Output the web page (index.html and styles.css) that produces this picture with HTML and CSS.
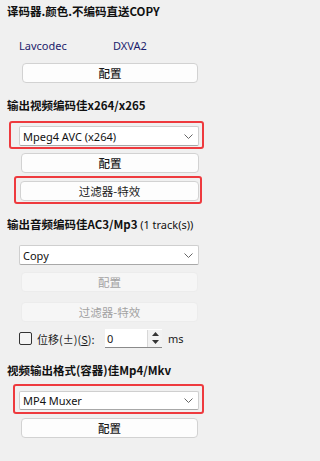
FILE: index.html
```html
<!DOCTYPE html>
<html lang="zh">
<head>
<meta charset="utf-8">
<link rel="stylesheet" href="styles.css">
</head>
<body>
<div class="panel">
  <div class="title t1">译码器.颜色.不编码直送COPY</div>
  <div class="info"><span class="info-a">Lavcodec</span><span>DXVA2</span></div>
  <div class="btn b1">配置</div>

  <div class="title t2">输出视频编码佳x264/x265</div>
  <div class="mark m1">
    <div class="combo">Mpeg4 AVC (x264)<svg class="chev" width="9" height="5" viewBox="0 0 9 5"><path d="M0.5 0.5 L4.5 4.5 L8.5 0.5" fill="none" stroke="#666" stroke-width="1"/></svg></div>
  </div>
  <div class="btn b2">配置</div>
  <div class="mark m2">
    <div class="btn b3">过滤器-特效</div>
  </div>

  <div class="title t3">输出音频编码佳AC3/Mp3 <span class="norm">(1 track(s))</span></div>
  <div class="combo c3">Copy<svg class="chev" width="9" height="5" viewBox="0 0 9 5"><path d="M0.5 0.5 L4.5 4.5 L8.5 0.5" fill="none" stroke="#666" stroke-width="1"/></svg></div>
  <div class="btn disabled d1">配置</div>
  <div class="btn disabled d2">过滤器-特效</div>
  <div class="shift">
    <span class="check"></span>
    <span class="shift-label">位移(±)(<u>S</u>):</span>
    <span class="spin"><span class="spin-val">0</span><span class="spin-btns"><svg width="7" height="4" viewBox="0 0 7 4"><path d="M0 4 L3.5 0 L7 4Z" fill="#333"/></svg><svg width="7" height="4" viewBox="0 0 7 4"><path d="M0 0 L3.5 4 L7 0Z" fill="#333"/></svg></span></span>
    <span class="ms">ms</span>
  </div>

  <div class="title t4">视频输出格式(容器)佳Mp4/Mkv</div>
  <div class="mark m3">
    <div class="combo">MP4 Muxer<svg class="chev" width="9" height="5" viewBox="0 0 9 5"><path d="M0.5 0.5 L4.5 4.5 L8.5 0.5" fill="none" stroke="#666" stroke-width="1"/></svg></div>
  </div>
  <div class="btn b4">配置</div>
</div>
</body>
</html>
```
FILE: styles.css
```css
html, body {
  margin: 0;
  padding: 0;
  background: #f0f0f0;
}
body {
  font-family: "Noto Sans", "Noto Sans CJK SC", sans-serif;
  font-size: 11px;
  color: #1a1a1a;
  width: 210px;
  height: 461px;
  overflow: hidden;
}
.panel {
  padding-top: 4px;
}
.title {
  height: 14px;
  line-height: 14px;
  padding-left: 7px;
  font-family: "Noto Sans CJK SC", "Noto Sans", sans-serif;
  font-weight: 700;
  font-size: 11.5px;
  white-space: nowrap;
  color: #111;
}
.title .norm {
  font-family: "Noto Sans", "Noto Sans CJK SC", sans-serif;
  font-weight: 400;
  font-size: 11px;
}
.info {
  margin-top: 20px;
  height: 16px;
  line-height: 16px;
  padding-left: 19px;
  display: flex;
  color: #1c1c6c;
}
.info-a {
  width: 94px;
}
.btn {
  box-sizing: border-box;
  height: 20px;
  border: 1px solid #d2d2d2;
  border-radius: 4px;
  background: #fdfdfd;
  display: flex;
  align-items: center;
  justify-content: center;
  font-family: "Noto Sans CJK SC", sans-serif;
  font-size: 11.5px;
  font-weight: 500;
  color: #1a1a1a;
}
.b1 {
  margin-top: 9px;
  margin-left: 22px;
  width: 176px;
}
.t2 { margin-top: 15px; }
.mark {
  box-sizing: border-box;
  border: 2px solid #ee3a3e;
  border-radius: 3px;
}
.m1 {
  margin-top: 9px;
  margin-left: 9px;
  width: 195px;
  height: 28px;
  padding: 3px 0 0 8px;
}
.combo {
  box-sizing: border-box;
  width: 180px;
  height: 20px;
  background: #ffffff;
  border: 1px solid #cfcfcf;
  border-bottom-color: #a8a8a8;
  border-radius: 2px;
  display: flex;
  align-items: center;
  justify-content: space-between;
  padding: 0 5px 0 3px;
  font-size: 11px;
  color: #111;
}
.b2 {
  margin-top: 4px;
  margin-left: 21px;
  width: 178px;
}
.m2 {
  margin-top: 3px;
  margin-left: 14px;
  width: 188px;
  height: 28px;
  padding: 3px 0 0 4px;
}
.b3 {
  width: 179px;
  font-weight: 400;
}
.t3 { margin-top: 13px; }
.c3 {
  margin-top: 14px;
  margin-left: 19px;
}
.disabled {
  background: #f6f6f6;
  border-color: #ececec;
  color: #a2a2a2;
  font-weight: 400;
}
.d1 {
  margin-top: 7px;
  margin-left: 21px;
  width: 177px;
}
.d2 {
  margin-top: 10px;
  margin-left: 21px;
  width: 177px;
}
.shift {
  margin-top: 7px;
  margin-left: 19px;
  height: 19px;
  display: flex;
  align-items: center;
}
.check {
  box-sizing: border-box;
  width: 13px;
  height: 13px;
  border: 1px solid #333;
  border-radius: 2px;
  background: #f4f4f4;
}
.shift-label {
  margin-left: 5px;
  width: 68px;
  font-family: "Noto Sans CJK SC", sans-serif;
  font-size: 11px;
  color: #1a1a1a;
}
.spin {
  box-sizing: border-box;
  width: 57px;
  height: 19px;
  background: #fff;
  border-bottom: 1px solid #8a8a8a;
  display: flex;
  align-items: center;
  justify-content: space-between;
}
.spin-val {
  padding-left: 2px;
}
.spin-btns {
  box-sizing: border-box;
  width: 15px;
  height: 17px;
  background: #f2f2f2;
  border-left: 1px solid #d8d8d8;
  display: flex;
  flex-direction: column;
  align-items: center;
  justify-content: space-around;
}
.ms {
  margin-left: 6px;
  color: #1a1a1a;
}
.t4 { margin-top: 15px; }
.m3 {
  margin-top: 7px;
  margin-left: 13px;
  width: 191px;
  height: 30px;
  padding: 5px 0 0 4px;
}
.m3 .combo { height: 19px; }
.b4 {
  margin-top: 4px;
  margin-left: 21px;
  width: 177px;
}
```
